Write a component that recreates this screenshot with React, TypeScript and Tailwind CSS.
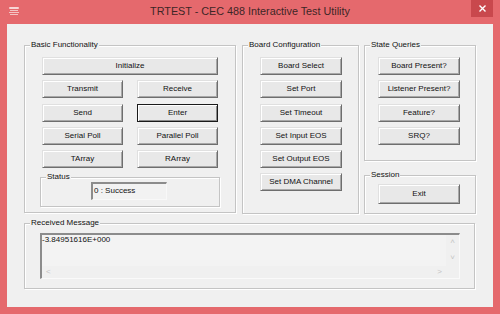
import type { ReactNode } from 'react';

const font = { fontFamily: '"Liberation Sans", Arial, sans-serif' };

function Btn({ label, w = 'w-[82px]', h = 'h-[18px]', isDefault = false }: { label: string; w?: string; h?: string; isDefault?: boolean }) {
  return (
    <button
      className={`${w} ${h} shrink-0 flex items-center justify-center bg-[#e8e8e8] text-[8px] leading-none text-[#111] border ${
        isDefault
          ? 'border-[#1a1a1a] shadow-[inset_1px_1px_0_#ffffff,inset_-1px_-1px_0_#8a8a8a]'
          : 'border-t-[#e0e0e0] border-l-[#e0e0e0] border-r-[#6e6e6e] border-b-[#6e6e6e] shadow-[inset_1px_1px_0_#ffffff,inset_-1px_-1px_0_#a8a8a8]'
      }`}
    >
      {label}
    </button>
  );
}

function Group({ title, className, children }: { title?: string; className: string; children: ReactNode }) {
  return (
    <div className={`relative border border-[#c4c4c4] shadow-[inset_1px_1px_0_#ffffff,1px_1px_0_#ffffff] ${className}`}>
      {title && (
        <span className="absolute left-[5px] -top-[6px] px-[1px] bg-[#f0f0f0] text-[8px] leading-[10px] text-[#111]">
          {title}
        </span>
      )}
      {children}
    </div>
  );
}

export default function App() {
  return (
    <div className="w-[500px] h-[314px] bg-[#e5696d] flex flex-col overflow-hidden" style={font}>
      {/* title bar */}
      <div className="relative h-[24px] shrink-0 flex items-center justify-center">
        <svg className="absolute left-[8px] top-[6px]" width="12" height="10" viewBox="0 0 12 10">
          <rect x="1" y="1" width="10" height="2" rx="1" fill="#f7d6d6" />
          <rect x="2" y="4" width="8" height="1" fill="#f3c4c4" />
          <rect x="1" y="6" width="10" height="1" fill="#f3c4c4" />
          <rect x="2" y="8" width="8" height="1" fill="#f3c4c4" />
        </svg>
        <span className="text-[10.8px] text-[#3d2626] -mt-[1px]">TRTEST - CEC 488 Interactive Test Utility</span>
        <div className="absolute right-[7px] top-0 w-[22px] h-[17px] bg-[#c9484d] flex items-center justify-center">
          <svg width="7" height="7" viewBox="0 0 7 7">
            <path d="M0.5 0.5 L6.5 6.5 M6.5 0.5 L0.5 6.5" stroke="#ffffff" strokeWidth="1.4" />
          </svg>
        </div>
      </div>

      {/* client area */}
      <div className="flex-1 mx-[7px] mb-[7px] bg-[#f0f0f0] pl-[17px] pt-[21px] flex flex-col gap-[9px]">
        <div className="flex items-start">
          {/* Basic Functionality */}
          <Group title="Basic Functionality" className="w-[212px] h-[168px] pl-[17px] pr-[17px] pt-[11px]">
            <div className="flex flex-col gap-[5.25px]">
              <Btn label="Initialize" w="w-[176px]" />
              <div className="flex justify-between">
                <Btn label="Transmit" w="w-[81px]" />
                <Btn label="Receive" w="w-[81px]" />
              </div>
              <div className="flex justify-between">
                <Btn label="Send" w="w-[81px]" />
                <Btn label="Enter" w="w-[81px]" isDefault />
              </div>
              <div className="flex justify-between">
                <Btn label="Serial Poll" w="w-[81px]" />
                <Btn label="Parallel Poll" w="w-[81px]" />
              </div>
              <div className="flex justify-between">
                <Btn label="TArray" w="w-[81px]" />
                <Btn label="RArray" w="w-[81px]" />
              </div>
            </div>
            <Group title="Status" className="-ml-[2px] mt-[9px] w-[180px] h-[30px] pl-[50px] pt-[4px]">
              <div className="w-[76px] h-[18px] border-t-2 border-l-2 border-t-[#8c8c8c] border-l-[#8c8c8c] border-r border-b border-r-[#f8f8f8] border-b-[#f8f8f8] bg-[#f2f2f2] text-[8px] leading-none text-[#111] pl-[1px] pt-[3px]">
                0 : Success
              </div>
            </Group>
          </Group>

          {/* Board Configuration */}
          <Group title="Board Configuration" className="ml-[6px] w-[117px] h-[169px] pl-[17px] pt-[11px]">
            <div className="flex flex-col gap-[5.25px]">
              <Btn label="Board Select" />
              <Btn label="Set Port" />
              <Btn label="Set Timeout" />
              <Btn label="Set Input EOS" />
              <Btn label="Set Output EOS" />
              <Btn label="Set DMA Channel" />
            </div>
          </Group>

          {/* right column */}
          <div className="ml-[5px] flex flex-col gap-[14px]">
            <Group title="State Queries" className="w-[112px] h-[116px] pl-[13px] pt-[11px]">
              <div className="flex flex-col gap-[5.25px]">
                <Btn label="Board Present?" />
                <Btn label="Listener Present?" />
                <Btn label="Feature?" />
                <Btn label="SRQ?" />
              </div>
            </Group>
            <Group title="Session" className="w-[112px] h-[39px] pl-[13px] pt-[8px]">
              <Btn label="Exit" h="h-[20px]" />
            </Group>
          </div>
        </div>

        {/* Received Message */}
        <Group title="Received Message" className="w-[451px] h-[66px] pl-[15px] pt-[9px]">
          <div className="relative w-[420px] h-[46px] border-t-2 border-l-2 border-t-[#8c8c8c] border-l-[#8c8c8c] border-r border-b border-r-[#fafafa] border-b-[#fafafa] bg-[#f3f3f3] flex">
            <div className="flex-1 flex flex-col">
              <div className="flex-1 text-[8px] leading-none text-[#111] pt-[1px]">-3.84951616E+000</div>
              <div className="h-[12px] flex items-center justify-between px-[4px] text-[#c4c4c4] text-[8px] bg-[#f0f0f0]">
                <span>&lt;</span>
                <span>&gt;</span>
              </div>
            </div>
            <div className="w-[13px] flex flex-col items-center justify-start pt-[3px] gap-[8px] text-[#c4c4c4] text-[8px] leading-none bg-[#f0f0f0]">
              <span>˄</span>
              <span>˅</span>
            </div>
          </div>
        </Group>
      </div>
    </div>
  );
}
